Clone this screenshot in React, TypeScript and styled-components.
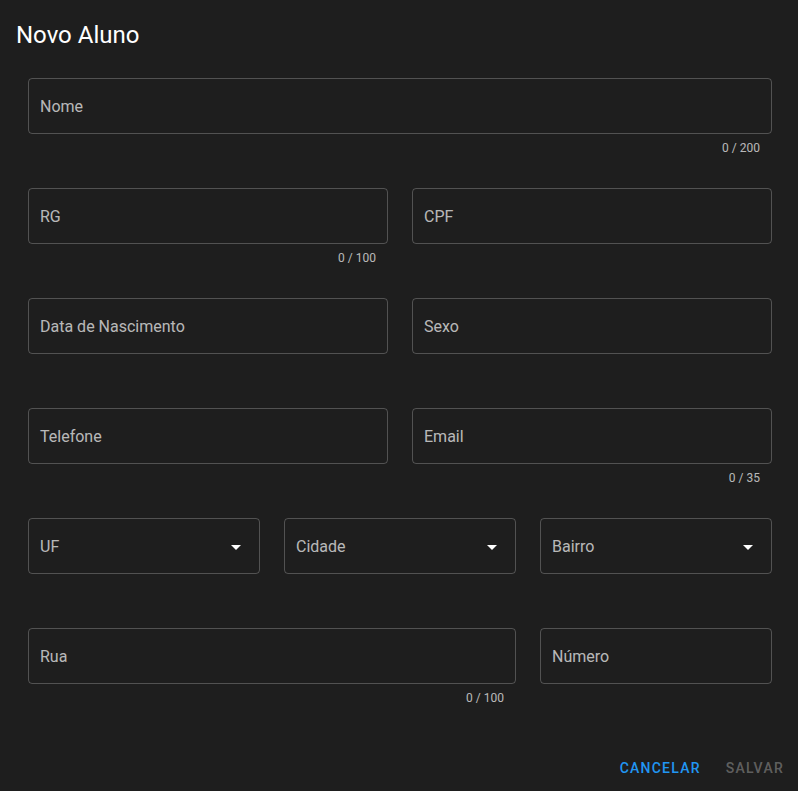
import styled, { createGlobalStyle } from "styled-components";

const GlobalStyle = createGlobalStyle`
  html, body {
    margin: 0;
    padding: 0;
    background: #1e1e1e;
  }
  body {
    font-family: Roboto, "Liberation Sans", Arial, sans-serif;
    -webkit-font-smoothing: antialiased;
  }
`;

interface FieldDef {
  label: string;
  span: number;
  counter?: string;
  select?: boolean;
}

const fields: FieldDef[] = [
  { label: "Nome", span: 6, counter: "0 / 200" },
  { label: "RG", span: 3, counter: "0 / 100" },
  { label: "CPF", span: 3 },
  { label: "Data de Nascimento", span: 3 },
  { label: "Sexo", span: 3 },
  { label: "Telefone", span: 3 },
  { label: "Email", span: 3, counter: "0 / 35" },
  { label: "UF", span: 2, select: true },
  { label: "Cidade", span: 2, select: true },
  { label: "Bairro", span: 2, select: true },
  { label: "Rua", span: 4, counter: "0 / 100" },
  { label: "Número", span: 2 },
];

const ArrowDropDown = () => (
  <svg width="24" height="24" viewBox="0 0 24 24" fill="#ffffff">
    <path d="M7 10l5 5 5-5z" />
  </svg>
);

const App = () => {
  return (
    <>
      <GlobalStyle />
      <Dialog>
        <Title>Novo Aluno</Title>
        <Form>
          {fields.map((f) => (
            <Cell key={f.label} $span={f.span}>
              <Outlined>
                <Label>{f.label}</Label>
                {f.select && <ArrowDropDown />}
              </Outlined>
              {f.counter && <Helper>{f.counter}</Helper>}
            </Cell>
          ))}
        </Form>
        <Actions>
          <TextButton>Cancelar</TextButton>
          <TextButton disabled>Salvar</TextButton>
        </Actions>
      </Dialog>
    </>
  );
};

const Dialog = styled.div`
  width: 798px;
  height: 791px;
  background: #1e1e1e;
  color: #ffffff;
  display: flex;
  flex-direction: column;
  box-sizing: border-box;
`;

const Title = styled.h2`
  margin: 0;
  padding: 19px 16px 0;
  font-size: 24px;
  font-weight: 400;
  line-height: 32px;
  color: #ffffff;
`;

const Form = styled.div`
  margin-top: 27px;
  padding: 0 26px 0 28px;
  display: grid;
  grid-template-columns: repeat(6, 1fr);
  column-gap: 24px;
  grid-auto-rows: 110px;
`;

const Cell = styled.div<{ $span: number }>`
  grid-column: span ${(p) => p.$span};
  display: flex;
  flex-direction: column;
`;

const Outlined = styled.div`
  height: 56px;
  box-sizing: border-box;
  border: 1px solid rgba(255, 255, 255, 0.23);
  border-radius: 4px;
  padding: 1px 11px 0 11px;
  display: flex;
  align-items: center;
  justify-content: space-between;
`;

const Label = styled.span`
  font-size: 16px;
  line-height: 24px;
  color: rgba(255, 255, 255, 0.7);
`;

const Helper = styled.span`
  margin-top: 4px;
  margin-right: 12px;
  align-self: flex-end;
  font-size: 12px;
  line-height: 20px;
  color: rgba(255, 255, 255, 0.7);
`;

const Actions = styled.div`
  margin-top: auto;
  padding: 0 6px 5px 0;
  display: flex;
  justify-content: flex-end;
  gap: 9px;
`;

const TextButton = styled.button`
  background: none;
  border: 0;
  padding: 6px 8px;
  min-width: 64px;
  font-family: inherit;
  font-size: 14px;
  font-weight: 500;
  line-height: 24px;
  letter-spacing: 1.25px;
  text-transform: uppercase;
  color: #2196f3;
  cursor: pointer;
  &:disabled {
    color: rgba(255, 255, 255, 0.3);
    cursor: default;
  }
`;

export default App;
